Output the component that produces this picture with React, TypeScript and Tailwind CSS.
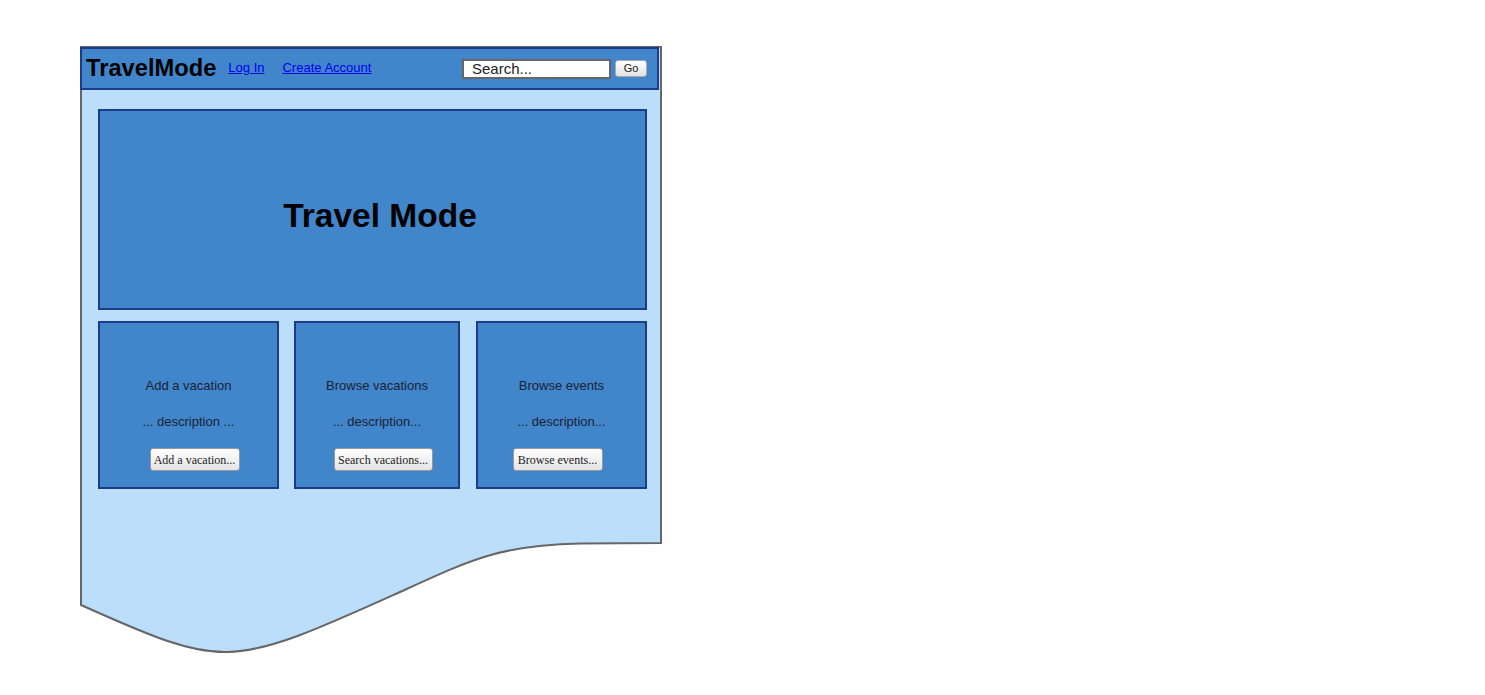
import React from 'react';

const cards = [
  { title: 'Add a vacation', desc: '... description ...', button: 'Add a vacation...', width: 'w-[181px]', btnWidth: 'w-[90px]', shift: 'ml-[12px]' },
  { title: 'Browse vacations', desc: '... description...', button: 'Search vacations...', width: 'w-[166px]', btnWidth: 'w-[99px]', shift: 'ml-[12px]' },
  { title: 'Browse events', desc: '... description...', button: 'Browse events...', width: 'w-[171px]', btnWidth: 'w-[90px]', shift: 'mr-[8px]' },
];

const App: React.FC = () => {
  return (
    <div className="w-[1485px] h-[695px] bg-white pt-[46px] pl-[80px] font-['Liberation_Sans',Arial,sans-serif]">
      <div className="relative w-[582px] h-[610px]">
        {/* document shape */}
        <svg className="absolute left-0 top-0" width="584" height="612" viewBox="80 46 584 612">
          <path
            d="M81,46.5 L661,46.5 L661,543 L580,543.5 C500,545 470,560 400,592 C320,628 270,651 228,652 C190,653 150,636 81,605 Z"
            fill="#bbdefb"
            stroke="#666666"
            strokeWidth="2"
          />
        </svg>

        <div className="relative flex flex-col">
          {/* header */}
          <div className="mt-[1px] w-[579px] h-[43px] bg-[#4186cb] border-2 border-[#1c3b8a] flex items-center pl-[4px] pr-[10px]">
            <span className="text-[23.7px] font-bold text-black leading-none">TravelMode</span>
            <a href="#" className="ml-[12px] text-[13px] text-[#0000ee] underline leading-none mb-[3px]">Log In</a>
            <a href="#" className="ml-[18px] text-[13px] text-[#0000ee] underline leading-none mb-[3px]">Create Account</a>
            <div className="ml-auto flex items-center gap-[4px]">
              <div className="w-[149px] h-[20px] bg-white border-2 border-[#666666] pl-[8px] flex items-center text-[15px] text-[#222] leading-none">
                Search...
              </div>
              <button className="w-[32px] h-[17px] rounded-[3px] border border-[#aaaaaa] bg-gradient-to-b from-white to-[#e2e2e2] text-[11px] text-[#222] leading-none">
                Go
              </button>
            </div>
          </div>

          {/* hero */}
          <div className="ml-[18px] mt-[19px] w-[549px] h-[201px] bg-[#4186cb] border-2 border-[#1c3b8a] flex items-center justify-center pt-[12px] pl-[15px]">
            <span className="text-[33.5px] font-bold text-black leading-none">Travel Mode</span>
          </div>

          {/* cards */}
          <div className="ml-[18px] mt-[11px] flex gap-[15px]">
            {cards.map((c, i) => (
              <div
                key={c.title}
                className={`${c.width} ${i === 2 ? 'ml-[1px]' : ''} h-[168px] bg-[#4186cb] border-2 border-[#1c3b8a] flex flex-col items-center pt-[55px]`}
              >
                <span className="text-[13px] leading-[16px] text-[#1a2233]">{c.title}</span>
                <span className="mt-[20px] text-[13px] leading-[16px] text-[#1a2233]">{c.desc}</span>
                <button
                  className={`${c.btnWidth} ${c.shift} mt-[18px] h-[23px] rounded-[3px] border border-[#999999] bg-gradient-to-b from-white to-[#e4e4e4] font-['Liberation_Serif','Times_New_Roman',serif] text-[12px] text-[#222] leading-none`}
                >
                  {c.button}
                </button>
              </div>
            ))}
          </div>
        </div>
      </div>
    </div>
  );
};

export default App;
